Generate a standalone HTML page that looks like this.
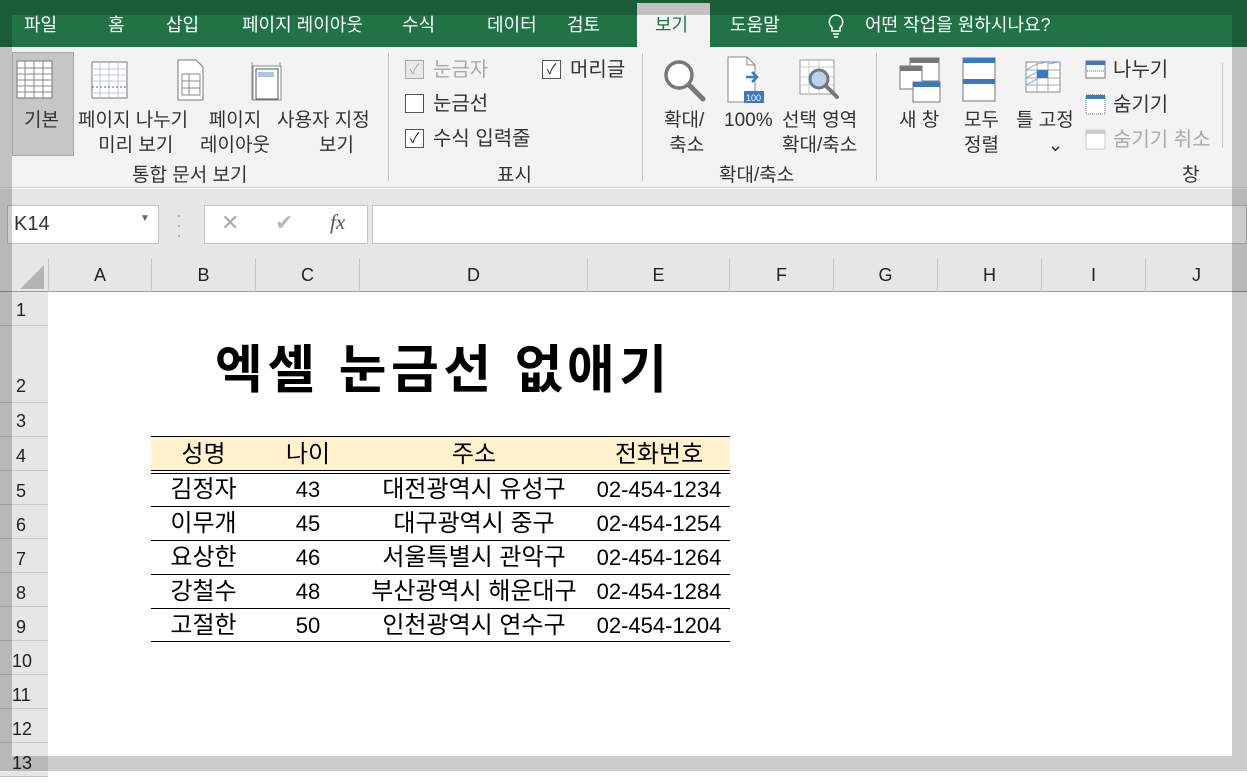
<!DOCTYPE html>
<html><head><meta charset="utf-8"><style>
*{margin:0;padding:0;box-sizing:border-box}
body{width:1247px;height:771px;overflow:hidden;position:relative;background:#fff;font-family:"Liberation Sans","Noto Sans CJK KR",sans-serif;color:#222}
.a{position:absolute}
.t{position:absolute;white-space:nowrap}
.tab{color:#fff;font-size:18px;top:11px}
.rb{font-size:19px;color:#333;text-align:center;line-height:25px}
.ck{font-size:20px}
.ch{top:258px;height:34px;border-right:1px solid #c6c6c6;font-size:18px;text-align:center;line-height:34px;color:#222}
.rh{left:0;width:48px;border-bottom:1px solid #c6c6c6;font-size:18px;padding-left:16px;background:#e6e6e6}
.cell{font-size:24px;color:#000;text-align:center;position:absolute;line-height:34px}
.num{font-size:22px}
.cb{position:absolute;width:19px;height:19px;border:1.5px solid #555;background:#fff;font-size:14px;line-height:16px;text-align:center}
</style></head><body>
<div class="a" style="left:0;top:0;width:1247px;height:47px;background:#217346"></div>
<div class="t tab" style="left:24px">파일</div>
<div class="t tab" style="left:108px">홈</div>
<div class="t tab" style="left:166px">삽입</div>
<div class="t tab" style="left:242px">페이지 레이아웃</div>
<div class="t tab" style="left:402px">수식</div>
<div class="t tab" style="left:487px">데이터</div>
<div class="t tab" style="left:567px">검토</div>
<div class="a" style="left:637px;top:3px;width:73px;height:44px;background:#f3f3f3"></div>
<div class="t tab" style="left:655px;color:#217346">보기</div>
<div class="t tab" style="left:730px">도움말</div>
<svg class="a" style="left:826px;top:13px" width="20" height="26"><path d="M10 2a7 7 0 0 0-4 12.5V18h8v-3.5A7 7 0 0 0 10 2z M7 21h6 M8 24h4" fill="none" stroke="#fff" stroke-width="1.5"/></svg>
<div class="t tab" style="left:865px">어떤 작업을 원하시나요?</div>
<div class="a" style="left:0;top:47px;width:1247px;height:141px;background:#f3f3f3;border-bottom:1px solid #d6d6d6"></div>
<div class="a" style="left:12px;top:52px;width:62px;height:104px;background:#c6c6c6;border:1px solid #a8a8a8"></div>
<svg class="a" style="left:16px;top:60px" width="38" height="40"><rect x="1" y="1" width="35" height="37" fill="#fff" stroke="#777"/><path d="M1 8h35M1 14h35M1 20h35M1 26h35M1 32h35M9 1v37M18 1v37M27 1v37" stroke="#888"/></svg>
<div class="t rb" style="left:24px;top:108px">기본</div>
<svg class="a" style="left:91px;top:61px" width="38" height="38"><rect x="1" y="1" width="35" height="36" fill="#fff" stroke="#777"/><path d="M1 8h35M1 14h35M1 20h35M1 32h35M9 1v36M18 1v36M27 1v36" stroke="#b5c9e5"/><path d="M1 26h35" stroke="#666" stroke-dasharray="2 2"/></svg>
<div class="t rb" style="left:78px;top:108px">페이지 나누기<br>&nbsp;미리 보기</div>
<svg class="a" style="left:177px;top:59px" width="28" height="42"><path d="M1 1h18l7 7v33H1z" fill="#fff" stroke="#777"/><path d="M5 15h18v21H5zM5 22h18M5 29h18M12 15v21" fill="none" stroke="#888"/></svg>
<div class="t rb" style="left:200px;top:108px">페이지<br>레이아웃</div>
<svg class="a" style="left:246px;top:60px" width="38" height="42"><path d="M6 2v38M34 2v38" stroke="#888"/><rect x="7" y="6" width="28" height="34" fill="#fff" stroke="#888"/><rect x="10" y="9" width="22" height="30" fill="#fff" stroke="#555"/><rect x="12" y="12" width="16" height="5" fill="#a9c4e4"/></svg>
<div class="t rb" style="left:277px;top:108px">사용자 지정<br>&nbsp;&nbsp;&nbsp;&nbsp;&nbsp;보기</div>
<div class="t rb" style="left:132px;top:163px">통합 문서 보기</div>
<div class="a" style="left:388px;top:53px;width:1px;height:128px;background:#c8c8c8"></div>
<div class="cb" style="left:405px;top:60px;border-color:#aaa;background:#e8e8e8;color:#aaa">✓</div>
<div class="t rb ck" style="left:433px;top:58px;color:#aaa">눈금자</div>
<div class="cb" style="left:542px;top:60px">✓</div>
<div class="t rb ck" style="left:570px;top:58px">머리글</div>
<div class="cb" style="left:405px;top:94px"></div>
<div class="t rb ck" style="left:433px;top:92px">눈금선</div>
<div class="cb" style="left:405px;top:129px">✓</div>
<div class="t rb ck" style="left:433px;top:127px">수식 입력줄</div>
<div class="t rb" style="left:497px;top:163px">표시</div>
<div class="a" style="left:642px;top:53px;width:1px;height:128px;background:#c8c8c8"></div>
<svg class="a" style="left:662px;top:58px" width="46" height="44"><circle cx="17" cy="17" r="13" fill="#fff" stroke="#777" stroke-width="3.5"/><path d="M27 27l14 14" stroke="#777" stroke-width="5" stroke-linecap="round"/></svg>
<div class="t rb" style="left:664px;top:108px">확대/<br>&nbsp;축소</div>
<svg class="a" style="left:727px;top:56px" width="38" height="48"><path d="M1 1h19l8 8v37H1z" fill="#fff" stroke="#888"/><path d="M20 1v8h8" fill="none" stroke="#888"/><path d="M19 21h10M25 16l5 5-5 5" stroke="#3a78c0" stroke-width="2.5" fill="none"/><rect x="17" y="35" width="20" height="12" fill="#3a78c0"/><text x="19" y="45" font-size="9" fill="#fff" font-family="Liberation Sans">100</text></svg>
<div class="t rb" style="left:724px;top:108px">100%</div>
<svg class="a" style="left:799px;top:59px" width="44" height="44"><rect x="1" y="1" width="34" height="34" fill="#fff" stroke="#999"/><path d="M1 8h34M1 18h34M1 26h34M10 1v34M20 1v34" stroke="#ccc"/><circle cx="20" cy="20" r="9" fill="#bcd3ee" stroke="#777" stroke-width="3"/><path d="M27 27l11 11" stroke="#777" stroke-width="4" stroke-linecap="round"/></svg>
<div class="t rb" style="left:782px;top:108px">선택 영역<br>확대/축소</div>
<div class="t rb" style="left:719px;top:163px">확대/축소</div>
<div class="a" style="left:876px;top:53px;width:1px;height:128px;background:#c8c8c8"></div>
<svg class="a" style="left:898px;top:56px" width="44" height="48"><rect x="12" y="2" width="29" height="23" fill="#fff" stroke="#777"/><rect x="12" y="2" width="29" height="5" fill="#777"/><rect x="2" y="10" width="22" height="23" fill="#fff" stroke="#777"/><rect x="2" y="10" width="22" height="5" fill="#777"/><rect x="15" y="26" width="27" height="20" fill="#fff" stroke="#777"/><rect x="15" y="26" width="27" height="5" fill="#3a78c0"/></svg>
<div class="t rb" style="left:899px;top:108px">새 창</div>
<svg class="a" style="left:962px;top:57px" width="34" height="46"><rect x="1" y="1" width="32" height="43" fill="#fff" stroke="#777"/><rect x="1" y="1" width="32" height="5" fill="#3a78c0"/><rect x="1" y="22" width="32" height="5" fill="#3a78c0"/></svg>
<div class="t rb" style="left:964px;top:108px">모두<br>정렬</div>
<svg class="a" style="left:1025px;top:61px" width="38" height="36"><rect x="1" y="1" width="34" height="30" fill="#fff" stroke="#888"/><path d="M1 9h34M1 17h34M1 24h34M12 1v30M23 1v30" stroke="#aaa"/><path d="M1 9L12 3M1 17L12 11M1 24L12 18M12 3L23 1M23 3L35 1" stroke="#8ab0dd"/><rect x="12" y="9" width="11" height="8" fill="#3a78c0"/></svg>
<div class="t rb" style="left:1016px;top:108px">틀 고정<br>&nbsp;&nbsp;&nbsp;&nbsp;⌄</div>
<svg class="a" style="left:1085px;top:60px" width="22" height="20"><rect x="1" y="1" width="19" height="17" fill="#fff" stroke="#777"/><rect x="1" y="1" width="19" height="4" fill="#3a78c0"/><path d="M2 11h17" stroke="#3a78c0" stroke-dasharray="1 1"/></svg>
<div class="t rb ck" style="left:1113px;top:58px">나누기</div>
<svg class="a" style="left:1085px;top:94px" width="22" height="22"><rect x="1" y="1" width="19" height="19" fill="#fff" stroke="#777" stroke-dasharray="1 1"/><rect x="1" y="1" width="19" height="4" fill="#3a78c0"/></svg>
<div class="t rb ck" style="left:1113px;top:93px">숨기기</div>
<svg class="a" style="left:1085px;top:129px" width="22" height="22"><rect x="1" y="1" width="19" height="19" fill="#fff" stroke="#ccc"/><rect x="1" y="1" width="19" height="4" fill="#ccc"/></svg>
<div class="t rb ck" style="left:1113px;top:128px;color:#aaa">숨기기 취소</div>
<div class="t rb" style="left:1182px;top:163px">창</div>
<div class="a" style="left:1222px;top:63px;width:1px;height:85px;background:#ccc"></div>
<div class="a" style="left:0;top:189px;width:1247px;height:69px;background:#e6e6e6"></div>
<div class="a" style="left:7px;top:205px;width:152px;height:39px;background:#fff;border:1px solid #c6c6c6"></div>
<div class="t" style="left:14px;top:213px;font-size:20px;color:#333">K14</div>
<div class="t" style="left:140px;top:213px;font-size:10px;color:#666">▼</div>
<div class="t" style="left:176px;top:210px;font-size:18px;color:#aaa;line-height:10px">·<br>·<br>·</div>
<div class="a" style="left:204px;top:205px;width:164px;height:39px;background:#fff;border:1px solid #c6c6c6"></div>
<div class="t" style="left:221px;top:210px;font-size:22px;color:#aaa">✕</div>
<div class="t" style="left:275px;top:210px;font-size:22px;color:#bbb">✔</div>
<div class="t" style="left:330px;top:210px;font-size:21px;color:#555;font-style:italic;font-family:'Liberation Serif',serif">fx</div>
<div class="a" style="left:372px;top:205px;width:875px;height:39px;background:#fff;border:1px solid #c6c6c6"></div>
<div class="a" style="left:0;top:258px;width:1247px;height:34px;background:#e6e6e6;border-bottom:1px solid #9a9a9a"></div>
<svg class="a" style="left:16px;top:263px" width="30" height="28"><path d="M28 2V26H4z" fill="#b4b4b4"/></svg>
<div class="a ch" style="left:48px;width:104px;border-left:1px solid #c6c6c6">A</div>
<div class="a ch" style="left:152px;width:104px">B</div>
<div class="a ch" style="left:256px;width:104px">C</div>
<div class="a ch" style="left:360px;width:228px">D</div>
<div class="a ch" style="left:588px;width:142px">E</div>
<div class="a ch" style="left:730px;width:104px">F</div>
<div class="a ch" style="left:834px;width:104px">G</div>
<div class="a ch" style="left:938px;width:104px">H</div>
<div class="a ch" style="left:1042px;width:104px">I</div>
<div class="a ch" style="left:1146px;width:101px;border-right:0">J</div>
<div class="a" style="left:0;top:292px;width:48px;height:479px;background:#e6e6e6;border-right:1px solid #9a9a9a"></div>
<div class="a rh" style="top:292px;height:34px;line-height:36px">1</div>
<div class="a rh" style="top:326px;height:77px;line-height:120px">2</div>
<div class="a rh" style="top:403px;height:34px;line-height:36px">3</div>
<div class="a rh" style="top:437px;height:34px;line-height:38px">4</div>
<div class="a rh" style="top:471px;height:34px;line-height:40px">5</div>
<div class="a rh" style="top:505px;height:34px;line-height:40px">6</div>
<div class="a rh" style="top:539px;height:34px;line-height:40px">7</div>
<div class="a rh" style="top:573px;height:34px;line-height:40px">8</div>
<div class="a rh" style="top:607px;height:34px;line-height:40px">9</div>
<div class="a rh" style="top:641px;height:34px;line-height:40px;padding-left:12px">10</div>
<div class="a rh" style="top:675px;height:34px;line-height:40px;padding-left:12px">11</div>
<div class="a rh" style="top:709px;height:34px;line-height:40px;padding-left:12px">12</div>
<div class="a rh" style="top:743px;height:34px;line-height:40px;padding-left:12px">13</div>
<div class="t" style="left:215px;top:328px;font-size:52px;font-weight:bold;color:#000;letter-spacing:4.5px">엑셀 눈금선 없애기</div>
<div class="a" style="left:151px;top:436px;width:579px;height:34px;background:#fff2cc;border-top:1px solid #000"></div>
<div class="a" style="left:151px;top:470px;width:579px;height:4px;border-top:1px solid #000;border-bottom:1px solid #000"></div>
<div class="a" style="left:151px;top:506px;width:579px;height:1px;background:#000"></div>
<div class="a" style="left:151px;top:540px;width:579px;height:1px;background:#000"></div>
<div class="a" style="left:151px;top:574px;width:579px;height:1px;background:#000"></div>
<div class="a" style="left:151px;top:608px;width:579px;height:1px;background:#000"></div>
<div class="a" style="left:151px;top:641px;width:579px;height:1px;background:#000"></div>
<div class="cell" style="left:151px;top:438px;width:105px">성명</div>
<div class="cell" style="left:256px;top:438px;width:104px">나이</div>
<div class="cell" style="left:360px;top:438px;width:228px">주소</div>
<div class="cell" style="left:588px;top:438px;width:142px">전화번호</div>
<div class="cell" style="left:151px;top:473px;width:105px">김정자<br>이무개<br>요상한<br>강철수<br>고절한</div>
<div class="cell num" style="left:256px;top:473px;width:104px">43<br>45<br>46<br>48<br>50</div>
<div class="cell" style="left:360px;top:473px;width:228px">대전광역시 유성구<br>대구광역시 중구<br>서울특별시 관악구<br>부산광역시 해운대구<br>인천광역시 연수구</div>
<div class="cell num" style="left:588px;top:473px;width:142px">02-454-1234<br>02-454-1254<br>02-454-1264<br>02-454-1284<br>02-454-1204</div>
<div class="a" style="left:0;top:0;width:1247px;height:15px;background:rgba(0,0,0,0.2)"></div>
<div class="a" style="left:0;top:15px;width:12px;height:741px;background:rgba(0,0,0,0.2)"></div>
<div class="a" style="left:1232px;top:15px;width:15px;height:741px;background:rgba(0,0,0,0.2)"></div>
<div class="a" style="left:0;top:756px;width:1247px;height:15px;background:rgba(0,0,0,0.2)"></div>
</body></html>
